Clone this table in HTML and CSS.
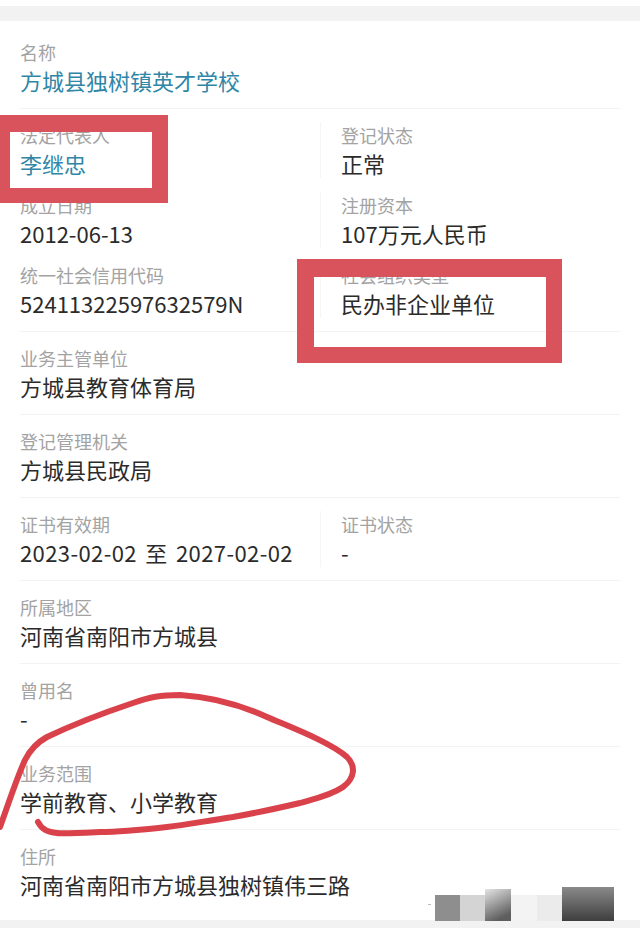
FILE: index.html
```html
<!DOCTYPE html>
<html lang="zh-CN">
<head>
  <meta charset="UTF-8">
  <meta name="viewport" content="width=device-width, initial-scale=1.0">
  <title>社会组织信息</title>
  <link rel="stylesheet" href="styles.css">
</head>
<body>
  <div class="page">
    <div class="topbar"></div>
    <div class="card">
      <div class="section">
        <div class="item">
          <p class="label">名称</p>
          <p class="value blue">方城县独树镇英才学校</p>
        </div>
      </div>
      <div class="section grid">
        <div class="item">
          <p class="label">法定代表人</p>
          <p class="value blue">李继忠</p>
        </div>
        <div class="item right">
          <p class="label">登记状态</p>
          <p class="value">正常</p>
        </div>
        <div class="item">
          <p class="label">成立日期</p>
          <p class="value">2012-06-13</p>
        </div>
        <div class="item right">
          <p class="label">注册资本</p>
          <p class="value">107万元人民币</p>
        </div>
        <div class="item">
          <p class="label">统一社会信用代码</p>
          <p class="value">52411322597632579N</p>
        </div>
        <div class="item right">
          <p class="label">社会组织类型</p>
          <p class="value">民办非企业单位</p>
        </div>
      </div>
      <div class="section">
        <div class="item">
          <p class="label">业务主管单位</p>
          <p class="value">方城县教育体育局</p>
        </div>
      </div>
      <div class="section">
        <div class="item">
          <p class="label">登记管理机关</p>
          <p class="value">方城县民政局</p>
        </div>
      </div>
      <div class="section grid">
        <div class="item">
          <p class="label">证书有效期</p>
          <p class="value range">2023-02-02 至 2027-02-02</p>
        </div>
        <div class="item right">
          <p class="label">证书状态</p>
          <p class="value">-</p>
        </div>
      </div>
      <div class="section">
        <div class="item">
          <p class="label">所属地区</p>
          <p class="value">河南省南阳市方城县</p>
        </div>
      </div>
      <div class="section">
        <div class="item">
          <p class="label">曾用名</p>
          <p class="value">-</p>
        </div>
      </div>
      <div class="section">
        <div class="item">
          <p class="label">业务范围</p>
          <p class="value">学前教育、小学教育</p>
        </div>
      </div>
      <div class="section last">
        <div class="item">
          <p class="label">住所</p>
          <p class="value">河南省南阳市方城县独树镇伟三路</p>
        </div>
      </div>
    </div>
    <div class="bottombar"></div>

    <!-- 截图上的红色标注 -->
    <svg class="marks" width="640" height="928" viewBox="0 0 640 928">
      <defs>
        <linearGradient id="g1" x1="0" y1="0" x2="0.4" y2="1">
          <stop offset="0" stop-color="#e4e4e4"/>
          <stop offset="1" stop-color="#5e5e5e"/>
        </linearGradient>
        <linearGradient id="g2" x1="0" y1="0" x2="0" y2="1">
          <stop offset="0" stop-color="#8a8a8a"/>
          <stop offset="1" stop-color="#3e3e3e"/>
        </linearGradient>
      </defs>
      <path class="box" fill-rule="evenodd" d="M0 115H168V203H0Z M10 132V188H152V132Z"/>
      <path class="box" fill-rule="evenodd" d="M297 259H562V363H297Z M314 277V347H546V277Z"/>
      <path class="circle" d="M0 827 C8 805 16 780 25 760 C30 750 36 743 47 737 C70 726 100 714 133 703 C150 697 160 695 180 695 C215 697 245 707 267 717 C290 727 330 742 347 757 C356 766 355 778 343 787 C330 796 310 800 300 803 C270 810 250 814 233 817 C200 822 185 825 167 827 C140 830 120 832 100 832 C80 833 62 834 57 833 C48 832 42 830 38 822"/>
      <rect x="428" y="904" width="3" height="1" fill="#bbb"/>
      <rect x="435" y="895" width="25" height="26" fill="#8e8e8e"/>
      <rect x="460" y="895" width="25" height="26" fill="#d4d4d4"/>
      <rect x="485" y="889" width="26" height="32" fill="url(#g1)"/>
      <rect x="511" y="895" width="26" height="26" fill="#f3f3f3"/>
      <rect x="537" y="895" width="25" height="26" fill="#ebebeb"/>
      <rect x="562" y="887" width="52" height="34" fill="url(#g2)"/>
    </svg>
  </div>
</body>
</html>
```

FILE: styles.css
```css
*{
  margin: 0;
  padding: 0;
  box-sizing: border-box;
}
body{
  background: #fff;
  font-family: "Noto Sans CJK SC", "Noto Sans", sans-serif;
}
.page{
  position: relative;
  width: 640px;
  height: 928px;
  overflow: hidden;
  display: flex;
  flex-direction: column;
}
.topbar{
  height: 15px;
  margin-top: 6px;
  background: #f2f2f2;
}
.card{
  flex: 1;
  padding: 5px 20px 0 20px;
  background: #fff;
}
.section{
  padding: 13px 0;
  border-bottom: 1px solid #f3f3f3;
}
.section.last{
  border-bottom: none;
}
.grid{
  display: grid;
  grid-template-columns: 300px 300px;
  row-gap: 14px;
}
.item{
  height: 56px;
}
.item.right{
  padding-left: 20px;
  border-left: 1px solid #f5f5f5;
}
.label{
  font-size: 18px;
  line-height: 26px;
  color: #a3a3a3;
}
.value{
  font-size: 22px;
  line-height: 30px;
  color: #2b2b2b;
  white-space: nowrap;
}
.range{
  letter-spacing: 0.4px;
  word-spacing: 3px;
}
.blue{
  color: #2f86a6;
}
.bottombar{
  height: 8px;
  background: #f2f2f2;
}
.marks{
  position: absolute;
  top: 0;
  left: 0;
  pointer-events: none;
}
.box{
  fill: #d9535c;
}
.circle{
  fill: none;
  stroke: #d9424b;
  stroke-width: 6;
  stroke-linecap: round;
  stroke-linejoin: round;
}
```
